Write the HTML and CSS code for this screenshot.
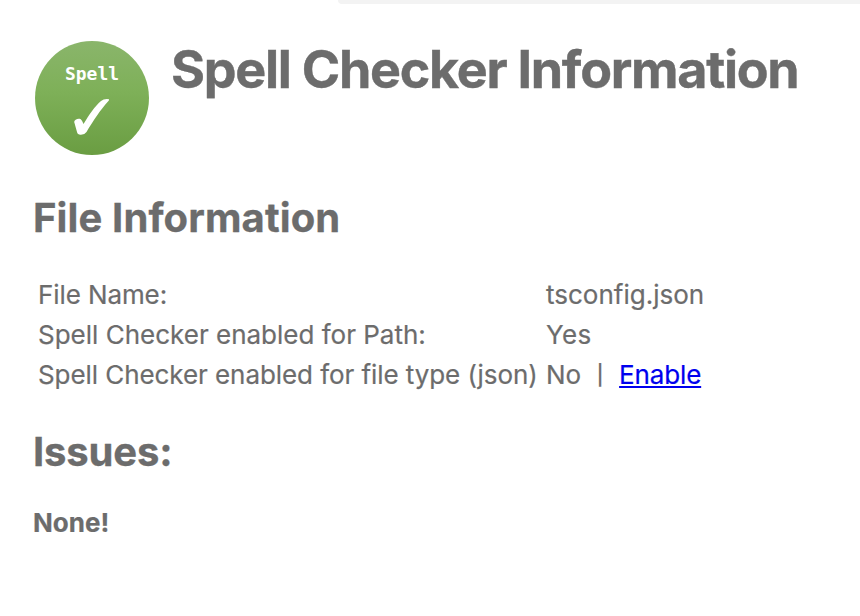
FILE: index.html
```html
<!DOCTYPE html>
<html lang="en">
<head>
<meta charset="utf-8">
<title>Spell Checker Information</title>
<link rel="stylesheet" href="styles.css">
</head>
<body>
<div class="scroll-edge"></div>
<main class="page">
<header class="header">
<svg class="logo" viewBox="0 0 114 114">
<defs><linearGradient id="g" x1="0" y1="0" x2="0" y2="1"><stop offset="0" stop-color="#8ab56b"/><stop offset=".45" stop-color="#7eb058"/><stop offset="1" stop-color="#6a9d42"/></linearGradient></defs>
<circle cx="57" cy="57" r="57" fill="url(#g)"/>
<text class="logo-text" x="30" y="39" textLength="54" lengthAdjust="spacingAndGlyphs">Spell</text>
<path d="M39.200 81C39.200 78.500 43 77 45.500 78Q47 79 48.500 83C54 74 60 65 66 60Q69 57.500 74 58.200Q74.500 59 73 60.500C66 68 58 80 51.500 91Q49.500 94 45.500 93.800Q42.500 93.800 42 91Z" fill="#fff"/>
</svg>
<h1>Spell Checker Information</h1>
</header>
<h2 class="file-title">File Information</h2>
<table>
<tr><td class="label file-name">File Name:</td><td>tsconfig.json</td></tr>
<tr><td class="label">Spell Checker enabled for Path:</td><td class="yes">Yes</td></tr>
<tr><td class="label file-type">Spell Checker enabled for file type (json)</td><td>No &nbsp;<span class="bar">|</span>&nbsp; <a href="#">Enable</a></td></tr>
</table>
<h2 class="issues-title">Issues:</h2>
<p class="none">None!</p>
</main>
</body>
</html>
```
FILE: styles.css
```css
body { margin: 0; background: #fff; color: #6c6c6c; font-family: Inter, sans-serif; }
.scroll-edge { height: 4px; margin-left: 338px; background: #f3f3f3; border-bottom-left-radius: 4px; }
.page { padding: 37px 33px 0; }
.header { display: flex; height: 114px; }
.logo { width: 114px; height: 114px; margin-left: 2px; flex: none; }
.logo-text { font: bold 18px "DejaVu Sans Mono", monospace; fill: #fff; }
h1, h2, p { margin: 0; white-space: nowrap; }
h1 { margin: -1px 0 0 22px; font-size: 52px; line-height: 60px; letter-spacing: -1.27px; -webkit-text-stroke: .4px #6c6c6c; }
h2 { font-size: 40px; line-height: 48px; }
.file-title { margin-top: 39px; letter-spacing: .12px; -webkit-text-stroke: .3px #6c6c6c; }
table { margin: 33px 0 0 5px; border-collapse: collapse; font-size: 26px; line-height: 40px; white-space: nowrap; -webkit-text-stroke: .2px; }
td { padding: 0; height: 40px; }
.label { width: 508px; }
.file-name { letter-spacing: -.1px; }
.file-type { letter-spacing: -.07px; }
.yes { letter-spacing: .3px; }
.bar { display: inline-block; transform: scaleY(.76); transform-origin: 50% 52%; }
a { color: #0000ee; letter-spacing: -.15px; }
.issues-title { margin-top: 33px; letter-spacing: -.15px; -webkit-text-stroke: .3px #6c6c6c; }
.none { margin-top: 29px; font-size: 26px; line-height: 36px; font-weight: 700; -webkit-text-stroke: .2px; }
```
